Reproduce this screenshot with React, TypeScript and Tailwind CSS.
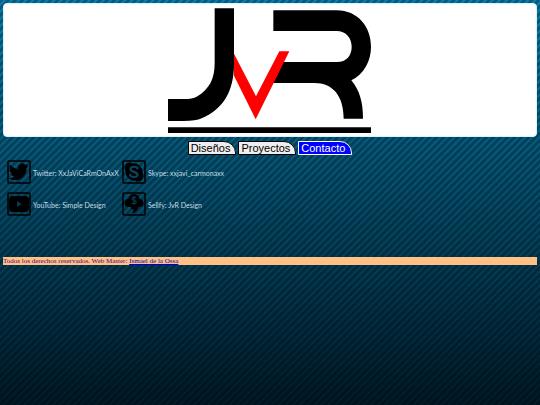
import type { ReactNode } from "react"

type Contact = {
  name: string
  label: string
  icon: ReactNode
}

const navItems = [
  { name: "Diseños", active: false },
  { name: "Proyectos", active: false },
  { name: "Contacto", active: true },
]

const contacts: Contact[] = [
  {
    name: "Twitter",
    label: "Twitter: XxJaViCaRmOnAxX",
    icon: (
      <path d="M21.500 5.500a8 8 0 0 1-2.300.7 4 4 0 0 0 1.700-2.300 8 8 0 0 1-2.500 1 4.200 4.200 0 0 0-7.200 3.900C7.800 8.700 5 7 3 4.500c-1.100 2-.5 4.400 1.300 5.600l-1.900-.5c0 2 1.400 3.600 3.300 4.100l-1.800.1c.6 1.600 2 2.700 3.800 2.700A8.500 8.500 0 0 1 1.800 18.300C9 22.800 19.500 18.800 19.500 8.200a8 8 0 0 0 2-2.700Z" />
    ),
  },
  {
    name: "Skype",
    label: "Skype: xxjavi_carmonaxx",
    icon: (
      <>
        <circle cx="8" cy="8" r="5.500" />
        <circle cx="16" cy="16" r="5.500" />
        <circle cx="12" cy="12" r="8.500" />
        <path
          d="M15.500 8.500C14.700 6.200 8.800 6 8.500 9.100c-.2 3.300 7.200 2.200 7 5.700-.2 3-6.400 2.900-7.300.2"
          fill="none"
          stroke="#07465f"
          strokeWidth="2.200"
          strokeLinecap="round"
        />
      </>
    ),
  },
  {
    name: "YouTube",
    label: "YouTube: Simple Design",
    icon: (
      <>
        <rect x="2" y="4" width="20" height="16" rx="4" />
        <path d="M10 9v6l5-3Z" fill="#07394f" />
      </>
    ),
  },
  {
    name: "Sellfy",
    label: "Sellfy: JvR Design",
    icon: (
      <>
        <circle cx="12" cy="7.500" r="5.500" />
        <circle cx="6.500" cy="11" r="4" />
        <circle cx="17.500" cy="11" r="4" />
        <path d="M6.500 10h11v5h-11Z" />
        <path d="M9 14h7.500c0 4-2.500 6.500-7 7.500 1.500-1.300 2-2.700 1.800-4.500H9Z" />
        <path
          d="M14 6c-1-1.200-4-1.200-4 .8 0 2 4.200 1.200 4.200 3.300 0 2-3.200 2-4.400.8M12 4v9"
          fill="none"
          stroke="#07394f"
          strokeWidth="1.200"
        />
      </>
    ),
  },
]

function Logo() {
  return (
    <svg viewBox="24 21 609 375" className="h-[125px] w-[203px]" role="img" aria-label="JvR">
      <path d="M164 22H222V190C222 270 190 325 125 352Q108 360 70 360H24V294H72Q98 294 110 287C150 263 164 232 164 185Z" />
      <path d="M340 28H530C593 28 633 77 633 137C633 180 612 219 574 238C600 270 609 305 609 353H551C551 283 517 246 464 246H335L350 183H530C560 183 575 163 575 137C575 110 557 90 530 90H340Z" />
      <path d="M222 158L288 286L358 151H388L287 355L222 224Z" fill="#ff0000" />
      <path d="M24 379H633V396H24Z" />
    </svg>
  )
}

function App() {
  return (
    <div className="min-h-screen bg-[repeating-linear-gradient(135deg,rgba(0,0,0,0.3)_0px,rgba(0,0,0,0.3)_2px,transparent_3px,transparent_4px,rgba(0,0,0,0.3)_5px),linear-gradient(to_bottom,#0880b0,#001a28)] p-[3px]">
      <header className="flex justify-center rounded-sm border border-[#d5f4ff] bg-white pt-1 pr-0.5 pb-[3px]">
        <Logo />
      </header>

      <nav className="mt-1 flex justify-center gap-0.5 font-['Liberation_Sans',sans-serif] text-[11px] leading-3">
        {navItems.map((item) => (
          <button
            key={item.name}
            type="button"
            className={
              item.active
                ? "rounded-tr-xl border border-white bg-[#0000ff] pr-1.5 pl-0.5 text-white"
                : "rounded-tr-xl border border-black bg-[#eeeeee] pr-[5px] pl-0.5 text-black"
            }
          >
            {item.name}
          </button>
        ))}
      </nav>

      <main className="grid grid-cols-[115px_auto] justify-start gap-y-2 px-1 pt-[5px] font-[Lato,sans-serif] text-[7px] text-[#c3dce5]">
        {contacts.map((contact) => (
          <div key={contact.name} className="flex items-center gap-0.5 whitespace-nowrap">
            <svg viewBox="0 0 24 24" className="size-6 shrink-0" aria-hidden="true">
              <rect x="1" y="1" width="22" height="22" rx="1" fill="none" stroke="#000" strokeWidth="1.500" />
              {contact.icon}
            </svg>
            <span className="pt-0.5">{contact.label}</span>
          </div>
        ))}
      </main>

      <footer className="mt-[41px] bg-[#ffc184] font-['Liberation_Serif',serif] text-[7px] leading-2 text-[#4b0082]">
        Todos los derechos reservados. Web Master:{" "}
        <a href="#" className="text-[#0000cc] underline">
          Ismael de la Ossa
        </a>
      </footer>
    </div>
  )
}

export default App
